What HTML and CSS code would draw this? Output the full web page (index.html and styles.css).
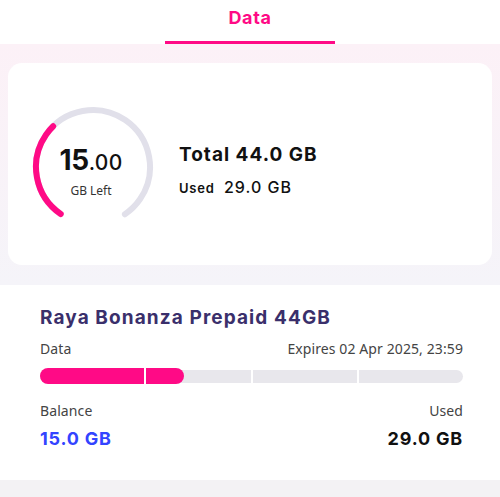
FILE: index.html
```html
<!DOCTYPE html>
<html lang="en">
<head>
  <meta charset="UTF-8" />
  <meta name="viewport" content="width=device-width, initial-scale=1.0" />
  <title>Data</title>
  <link rel="stylesheet" href="styles.css">
</head>
<body>
  <div class="tabs">
    <div class="tab active">Data</div>
  </div>

  <div class="summary">
    <div class="card">
      <div class="gauge">
        <svg width="126" height="126" viewBox="0 0 126 126">
          <circle cx="63" cy="63" r="57" fill="none" stroke="#e1e0ea" stroke-width="6" stroke-linecap="round"
            stroke-dasharray="289.5 400" transform="rotate(124.5 63 63)" />
          <circle cx="63" cy="63" r="57" fill="none" stroke="#ff0a86" stroke-width="6" stroke-linecap="round"
            stroke-dasharray="100.5 400" transform="rotate(124.5 63 63)" />
        </svg>
        <div class="gauge-text">
          <div class="left-num"><span class="big">15</span><span class="dec">.00</span></div>
          <div class="left-label">GB Left</div>
        </div>
      </div>
      <div class="totals">
        <div class="total">Total 44.0 GB</div>
        <div class="used"><span class="used-label">Used</span> 29.0 GB</div>
      </div>
    </div>
  </div>

  <div class="plan">
    <h2>Raya Bonanza Prepaid 44GB</h2>
    <div class="row muted">
      <span>Data</span>
      <span>Expires 02 Apr 2025, 23:59</span>
    </div>
    <div class="bar">
      <div class="seg"></div>
      <div class="seg"></div>
      <div class="seg"></div>
      <div class="seg"></div>
      <div class="fill" style="width: 144px"></div>
    </div>
    <div class="row muted labels">
      <span>Balance</span>
      <span>Used</span>
    </div>
    <div class="row amounts">
      <span class="balance">15.0 GB</span>
      <span>29.0 GB</span>
    </div>
  </div>

  <div class="bottom"></div>
</body>
</html>
```

FILE: styles.css
```css
body {
  margin: 0;
  font-family: 'Noto Sans', sans-serif;
  background: #f3f2f4;
  color: #111;
}
.tabs {
  height: 44px;
  background: #fff;
  display: flex;
  justify-content: center;
}
.tab {
  width: 170px;
  text-align: center;
  font-family: 'Inter', sans-serif;
  font-weight: 700;
  font-size: 18px;
  letter-spacing: 0.6px;
  color: #ff0a86;
  padding-top: 7px;
  box-sizing: border-box;
}
.tab.active {
  border-bottom: 3px solid #ff0a86;
}
.summary {
  background: linear-gradient(to bottom, #fcf1f7, #f5f4f9);
  padding: 19px 8px 20px;
}
.card {
  background: #fff;
  border-radius: 14px;
  height: 202px;
  display: flex;
  align-items: center;
  padding: 6px 0 0 22px;
  box-sizing: border-box;
}
.gauge {
  position: relative;
  width: 126px;
  height: 126px;
}
.gauge svg {
  display: block;
}
.gauge-text {
  position: absolute;
  inset: 0;
  display: flex;
  flex-direction: column;
  align-items: center;
  justify-content: center;
  padding-right: 4px;
  padding-top: 9px;
}
.left-num {
  font-family: 'Inter', sans-serif;
  line-height: 30px;
  letter-spacing: -0.3px;
}
.left-num .big {
  font-size: 28px;
  font-weight: 700;
}
.left-num .dec {
  font-size: 21px;
  font-weight: 500;
  letter-spacing: 0.3px;
}
.left-label {
  font-size: 12px;
  color: #333;
  margin-top: 3px;
}
.totals {
  margin-left: 23px;
  margin-top: 5px;
  font-family: 'Inter', sans-serif;
}
.total {
  font-size: 19px;
  font-weight: 700;
  letter-spacing: 1px;
}
.used {
  font-size: 16px;
  font-weight: 500;
  letter-spacing: 1px;
  margin-top: 11px;
}
.used-label {
  font-size: 13px;
  font-weight: 600;
  letter-spacing: 0.8px;
  margin-right: 4px;
}
.plan {
  background: #fff;
  padding: 22px 37px 29px 40px;
  height: 195px;
  box-sizing: border-box;
}
.plan h2 {
  margin: 0;
  font-family: 'Inter', sans-serif;
  font-size: 19px;
  font-weight: 700;
  color: #3a2f6b;
  letter-spacing: 1.1px;
  line-height: 22px;
}
.row {
  display: flex;
  justify-content: space-between;
}
.muted {
  font-size: 14px;
  color: #444;
  margin-top: 10px;
  letter-spacing: 0.1px;
}
.bar {
  position: relative;
  display: flex;
  gap: 2px;
  height: 13px;
  margin-top: 12px;
}
.seg {
  flex: 1;
  background: #e8e7ec;
}
.seg:first-child {
  border-radius: 7px 0 0 7px;
}
.seg:nth-child(4) {
  border-radius: 0 7px 7px 0;
}
.fill {
  position: absolute;
  left: 0;
  top: -2px;
  height: 16px;
  background: #ff0a86;
  border-radius: 8px;
}
.fill::after {
  content: '';
  position: absolute;
  left: 104px;
  top: 0;
  width: 2px;
  height: 100%;
  background: #fff;
}
.labels {
  margin-top: 18px;
}
.amounts {
  font-family: 'Inter', sans-serif;
  font-size: 18px;
  font-weight: 700;
  letter-spacing: 0.8px;
  margin-top: 8px;
}
.balance {
  color: #3344ff;
}
.bottom {
  height: 17px;
}
```
